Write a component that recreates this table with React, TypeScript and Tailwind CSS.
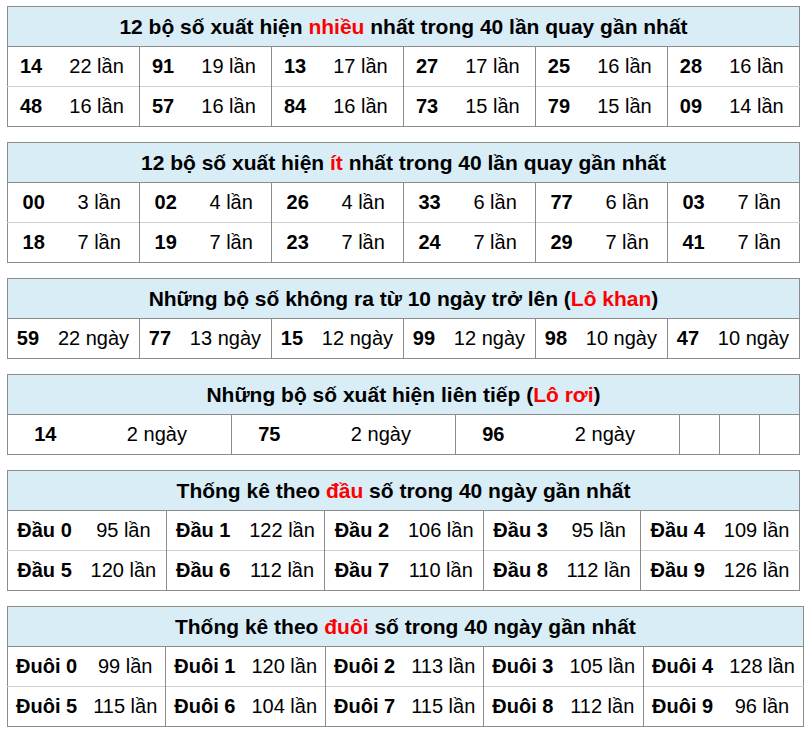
import React from 'react';

type Pair = [string, string];

const nhieu: Pair[] = [
  ['14', '22 lần'], ['91', '19 lần'], ['13', '17 lần'], ['27', '17 lần'], ['25', '16 lần'], ['28', '16 lần'],
  ['48', '16 lần'], ['57', '16 lần'], ['84', '16 lần'], ['73', '15 lần'], ['79', '15 lần'], ['09', '14 lần'],
];

const it: Pair[] = [
  ['00', '3 lần'], ['02', '4 lần'], ['26', '4 lần'], ['33', '6 lần'], ['77', '6 lần'], ['03', '7 lần'],
  ['18', '7 lần'], ['19', '7 lần'], ['23', '7 lần'], ['24', '7 lần'], ['29', '7 lần'], ['41', '7 lần'],
];

const khan: Pair[] = [
  ['59', '22 ngày'], ['77', '13 ngày'], ['15', '12 ngày'], ['99', '12 ngày'], ['98', '10 ngày'], ['47', '10 ngày'],
];

const roi: Pair[] = [['14', '2 ngày'], ['75', '2 ngày'], ['96', '2 ngày']];

const dau: Pair[] = [
  ['Đầu 0', '95 lần'], ['Đầu 1', '122 lần'], ['Đầu 2', '106 lần'], ['Đầu 3', '95 lần'], ['Đầu 4', '109 lần'],
  ['Đầu 5', '120 lần'], ['Đầu 6', '112 lần'], ['Đầu 7', '110 lần'], ['Đầu 8', '112 lần'], ['Đầu 9', '126 lần'],
];

const duoi: Pair[] = [
  ['Đuôi 0', '99 lần'], ['Đuôi 1', '120 lần'], ['Đuôi 2', '113 lần'], ['Đuôi 3', '105 lần'], ['Đuôi 4', '128 lần'],
  ['Đuôi 5', '115 lần'], ['Đuôi 6', '104 lần'], ['Đuôi 7', '115 lần'], ['Đuôi 8', '112 lần'], ['Đuôi 9', '96 lần'],
];

function chunk(items: Pair[], size: number) {
  const rows: Pair[][] = [];
  for (let i = 0; i < items.length; i += size) rows.push(items.slice(i, i + size));
  return rows;
}

function StatTable({
  title,
  items,
  perRow,
  empties = 0,
}: {
  title: React.ReactNode;
  items: Pair[];
  perRow: number;
  empties?: number;
}) {
  const rows = chunk(items, perRow);
  return (
    <table className="w-full border-collapse border border-[#8c8c8c] mb-[15px] last:mb-0">
      <thead>
        <tr>
          <th
            colSpan={perRow * 2 + empties}
            className="bg-[#d9edf7] border-b border-[#8c8c8c] py-[8px] leading-[23px] text-[21px] font-bold text-center text-black"
          >
            {title}
          </th>
        </tr>
      </thead>
      <tbody>
        {rows.map((row, ri) => (
          <tr key={ri} className="border-t border-[#cfcfcf] first:border-t-0">
            {row.map(([num, count], ci) => (
              <React.Fragment key={ci}>
                <td
                  className={`px-[8px] py-[8px] leading-[23px] text-center font-bold whitespace-nowrap text-black ${
                    ci > 0 ? 'border-l border-[#8c8c8c]' : ''
                  }`}
                >
                  {num}
                </td>
                <td className="px-[8px] py-[8px] leading-[23px] text-center whitespace-nowrap text-black">{count}</td>
              </React.Fragment>
            ))}
            {/* empty filler cells */}
            {Array.from({ length: empties }).map((_, ei) => (
              <td key={`e${ei}`} className="w-[40px] border-l border-[#8c8c8c] p-0 py-[8px] leading-[23px]">
                &nbsp;
              </td>
            ))}
          </tr>
        ))}
      </tbody>
    </table>
  );
}

const Red = ({ children }: { children: React.ReactNode }) => <span className="text-[#ff0000]">{children}</span>;

export default function App() {
  return (
    <div className="w-[807px] h-[734px] bg-white px-[7px] pt-[6px] text-[20px] font-['Liberation_Sans',Arial,sans-serif]">
      <StatTable
        title={<>12 bộ số xuất hiện <Red>nhiều</Red> nhất trong 40 lần quay gần nhất</>}
        items={nhieu}
        perRow={6}
      />
      <StatTable
        title={<>12 bộ số xuất hiện <Red>ít</Red> nhất trong 40 lần quay gần nhất</>}
        items={it}
        perRow={6}
      />
      <StatTable
        title={<>Những bộ số không ra từ 10 ngày trở lên (<Red>Lô khan</Red>)</>}
        items={khan}
        perRow={6}
      />
      <StatTable
        title={<>Những bộ số xuất hiện liên tiếp (<Red>Lô rơi</Red>)</>}
        items={roi}
        perRow={3}
        empties={3}
      />
      <StatTable
        title={<>Thống kê theo <Red>đầu</Red> số trong 40 ngày gần nhất</>}
        items={dau}
        perRow={5}
      />
      <StatTable
        title={<>Thống kê theo <Red>đuôi</Red> số trong 40 ngày gần nhất</>}
        items={duoi}
        perRow={5}
      />
    </div>
  );
}
